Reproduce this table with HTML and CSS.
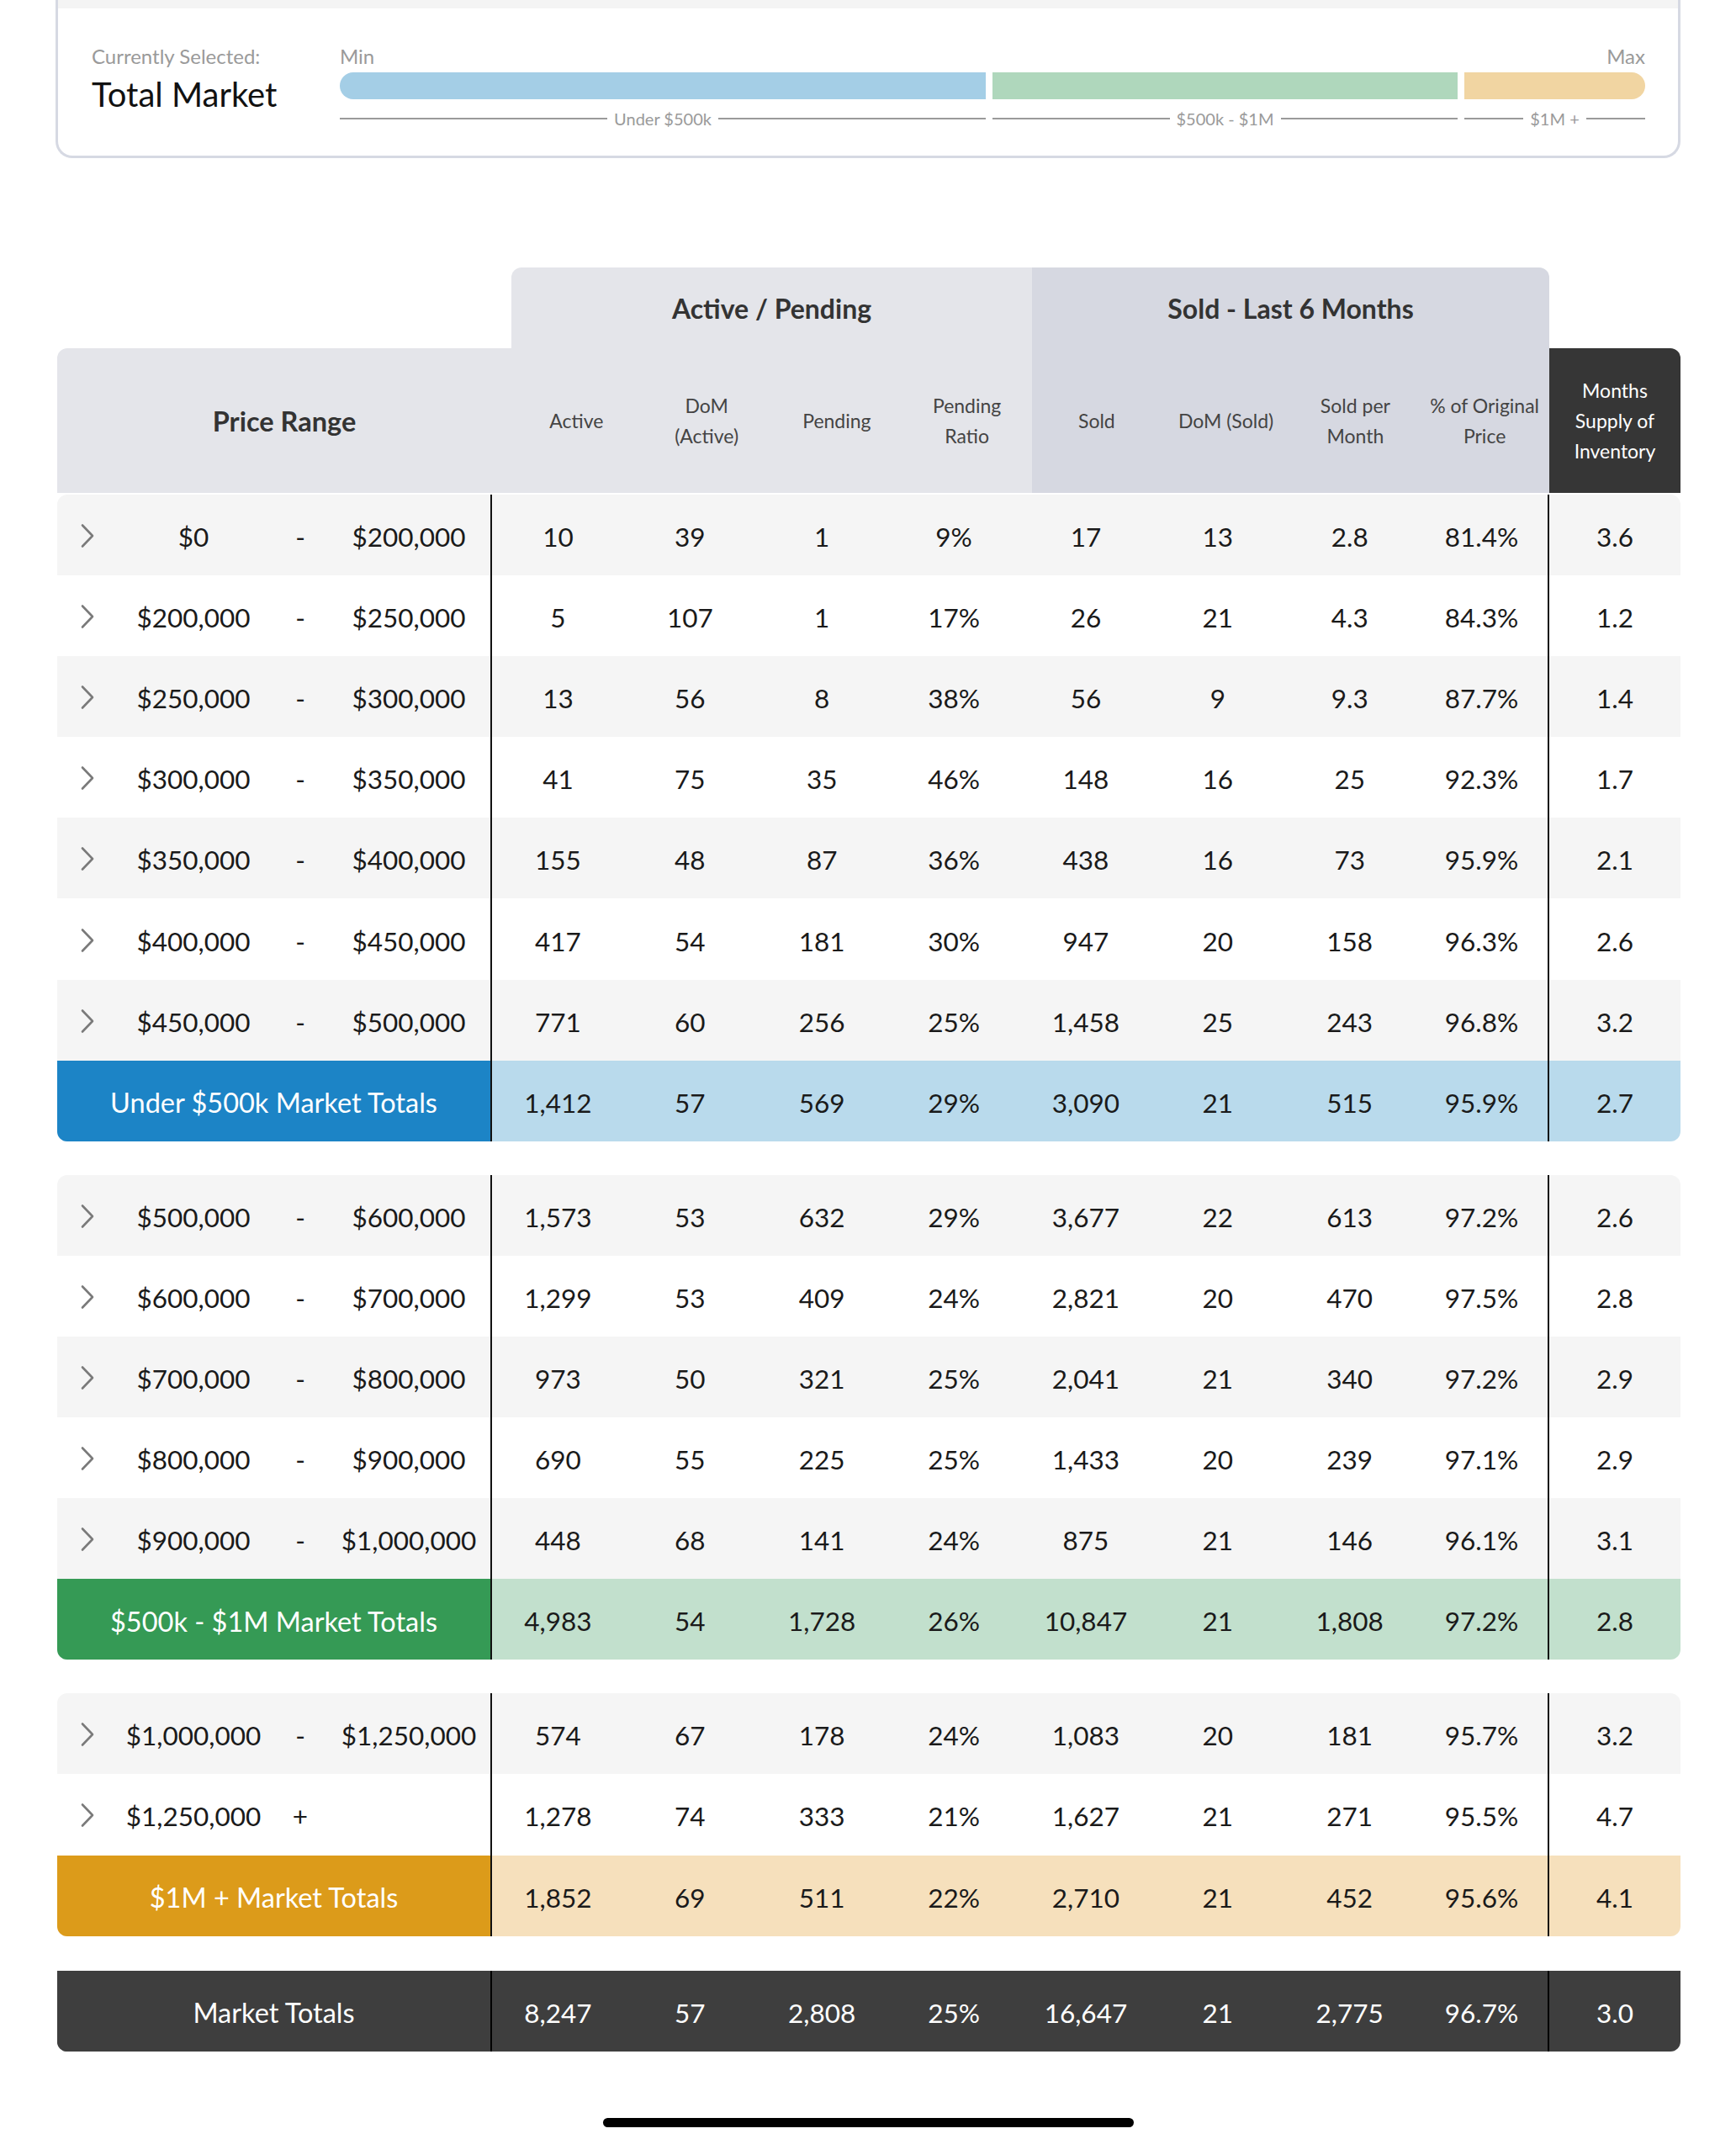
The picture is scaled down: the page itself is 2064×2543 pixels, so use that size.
FILE: index.html
```html
<!DOCTYPE html>
<html lang="en">
<head>
<meta charset="utf-8">
<title>Market Report</title>
<link rel="stylesheet" href="styles.css">
</head>
<body>
<div class="page">
  <div class="card">
    <div class="card-top"></div>
    <div class="card-body">
      <div class="selected">
        <div class="sel-label">Currently Selected:</div>
        <div class="sel-value">Total Market</div>
      </div>
      <div class="scale">
        <div class="scale-ends"><span>Min</span><span>Max</span></div>
        <div class="bars">
          <div class="seg seg-blue"><div class="bar"></div><div class="seg-label"><span>Under $500k</span></div></div>
          <div class="seg seg-green"><div class="bar"></div><div class="seg-label"><span>$500k - $1M</span></div></div>
          <div class="seg seg-orange"><div class="bar"></div><div class="seg-label"><span>$1M +</span></div></div>
        </div>
      </div>
    </div>
  </div>

  <div class="table">
    <div class="thead">
      <div class="th-empty"></div>
      <div class="th-group th-active">Active / Pending</div>
      <div class="th-group th-sold">Sold - Last 6 Months</div>
      <div class="th-empty"></div>
      <div class="th-price">Price Range</div>
      <div class="th-col th-a">Active</div>
      <div class="th-col th-a">DoM<br>(Active)</div>
      <div class="th-col th-a">Pending</div>
      <div class="th-col th-a">Pending<br>Ratio</div>
      <div class="th-col th-s">Sold</div>
      <div class="th-col th-s">DoM (Sold)</div>
      <div class="th-col th-s">Sold per<br>Month</div>
      <div class="th-col th-s">% of Original<br>Price</div>
      <div class="th-months">Months<br>Supply of<br>Inventory</div>
    </div>

    <div class="section first">
      <div class="row alt">
        <div class="price"><svg class="chev" viewBox="0 0 18 30"><path d="M3 2.5 L15 15 L3 27.5"/></svg><span class="p1">$0</span><span class="dash">-</span><span class="p2">$200,000</span></div>
        <div class="c">10</div><div class="c">39</div><div class="c">1</div><div class="c">9%</div><div class="c">17</div><div class="c">13</div><div class="c">2.8</div><div class="c">81.4%</div><div class="m">3.6</div>
      </div>
      <div class="row">
        <div class="price"><svg class="chev" viewBox="0 0 18 30"><path d="M3 2.5 L15 15 L3 27.5"/></svg><span class="p1">$200,000</span><span class="dash">-</span><span class="p2">$250,000</span></div>
        <div class="c">5</div><div class="c">107</div><div class="c">1</div><div class="c">17%</div><div class="c">26</div><div class="c">21</div><div class="c">4.3</div><div class="c">84.3%</div><div class="m">1.2</div>
      </div>
      <div class="row alt">
        <div class="price"><svg class="chev" viewBox="0 0 18 30"><path d="M3 2.5 L15 15 L3 27.5"/></svg><span class="p1">$250,000</span><span class="dash">-</span><span class="p2">$300,000</span></div>
        <div class="c">13</div><div class="c">56</div><div class="c">8</div><div class="c">38%</div><div class="c">56</div><div class="c">9</div><div class="c">9.3</div><div class="c">87.7%</div><div class="m">1.4</div>
      </div>
      <div class="row">
        <div class="price"><svg class="chev" viewBox="0 0 18 30"><path d="M3 2.5 L15 15 L3 27.5"/></svg><span class="p1">$300,000</span><span class="dash">-</span><span class="p2">$350,000</span></div>
        <div class="c">41</div><div class="c">75</div><div class="c">35</div><div class="c">46%</div><div class="c">148</div><div class="c">16</div><div class="c">25</div><div class="c">92.3%</div><div class="m">1.7</div>
      </div>
      <div class="row alt">
        <div class="price"><svg class="chev" viewBox="0 0 18 30"><path d="M3 2.5 L15 15 L3 27.5"/></svg><span class="p1">$350,000</span><span class="dash">-</span><span class="p2">$400,000</span></div>
        <div class="c">155</div><div class="c">48</div><div class="c">87</div><div class="c">36%</div><div class="c">438</div><div class="c">16</div><div class="c">73</div><div class="c">95.9%</div><div class="m">2.1</div>
      </div>
      <div class="row">
        <div class="price"><svg class="chev" viewBox="0 0 18 30"><path d="M3 2.5 L15 15 L3 27.5"/></svg><span class="p1">$400,000</span><span class="dash">-</span><span class="p2">$450,000</span></div>
        <div class="c">417</div><div class="c">54</div><div class="c">181</div><div class="c">30%</div><div class="c">947</div><div class="c">20</div><div class="c">158</div><div class="c">96.3%</div><div class="m">2.6</div>
      </div>
      <div class="row alt">
        <div class="price"><svg class="chev" viewBox="0 0 18 30"><path d="M3 2.5 L15 15 L3 27.5"/></svg><span class="p1">$450,000</span><span class="dash">-</span><span class="p2">$500,000</span></div>
        <div class="c">771</div><div class="c">60</div><div class="c">256</div><div class="c">25%</div><div class="c">1,458</div><div class="c">25</div><div class="c">243</div><div class="c">96.8%</div><div class="m">3.2</div>
      </div>
      <div class="row total total-blue">
        <div class="price tlabel">Under $500k Market Totals</div>
        <div class="c">1,412</div><div class="c">57</div><div class="c">569</div><div class="c">29%</div><div class="c">3,090</div><div class="c">21</div><div class="c">515</div><div class="c">95.9%</div><div class="m">2.7</div>
      </div>
    </div>

    <div class="section">
      <div class="row alt">
        <div class="price"><svg class="chev" viewBox="0 0 18 30"><path d="M3 2.5 L15 15 L3 27.5"/></svg><span class="p1">$500,000</span><span class="dash">-</span><span class="p2">$600,000</span></div>
        <div class="c">1,573</div><div class="c">53</div><div class="c">632</div><div class="c">29%</div><div class="c">3,677</div><div class="c">22</div><div class="c">613</div><div class="c">97.2%</div><div class="m">2.6</div>
      </div>
      <div class="row">
        <div class="price"><svg class="chev" viewBox="0 0 18 30"><path d="M3 2.5 L15 15 L3 27.5"/></svg><span class="p1">$600,000</span><span class="dash">-</span><span class="p2">$700,000</span></div>
        <div class="c">1,299</div><div class="c">53</div><div class="c">409</div><div class="c">24%</div><div class="c">2,821</div><div class="c">20</div><div class="c">470</div><div class="c">97.5%</div><div class="m">2.8</div>
      </div>
      <div class="row alt">
        <div class="price"><svg class="chev" viewBox="0 0 18 30"><path d="M3 2.5 L15 15 L3 27.5"/></svg><span class="p1">$700,000</span><span class="dash">-</span><span class="p2">$800,000</span></div>
        <div class="c">973</div><div class="c">50</div><div class="c">321</div><div class="c">25%</div><div class="c">2,041</div><div class="c">21</div><div class="c">340</div><div class="c">97.2%</div><div class="m">2.9</div>
      </div>
      <div class="row">
        <div class="price"><svg class="chev" viewBox="0 0 18 30"><path d="M3 2.5 L15 15 L3 27.5"/></svg><span class="p1">$800,000</span><span class="dash">-</span><span class="p2">$900,000</span></div>
        <div class="c">690</div><div class="c">55</div><div class="c">225</div><div class="c">25%</div><div class="c">1,433</div><div class="c">20</div><div class="c">239</div><div class="c">97.1%</div><div class="m">2.9</div>
      </div>
      <div class="row alt">
        <div class="price"><svg class="chev" viewBox="0 0 18 30"><path d="M3 2.5 L15 15 L3 27.5"/></svg><span class="p1">$900,000</span><span class="dash">-</span><span class="p2">$1,000,000</span></div>
        <div class="c">448</div><div class="c">68</div><div class="c">141</div><div class="c">24%</div><div class="c">875</div><div class="c">21</div><div class="c">146</div><div class="c">96.1%</div><div class="m">3.1</div>
      </div>
      <div class="row total total-green">
        <div class="price tlabel">$500k - $1M Market Totals</div>
        <div class="c">4,983</div><div class="c">54</div><div class="c">1,728</div><div class="c">26%</div><div class="c">10,847</div><div class="c">21</div><div class="c">1,808</div><div class="c">97.2%</div><div class="m">2.8</div>
      </div>
    </div>

    <div class="section">
      <div class="row alt">
        <div class="price"><svg class="chev" viewBox="0 0 18 30"><path d="M3 2.5 L15 15 L3 27.5"/></svg><span class="p1">$1,000,000</span><span class="dash">-</span><span class="p2">$1,250,000</span></div>
        <div class="c">574</div><div class="c">67</div><div class="c">178</div><div class="c">24%</div><div class="c">1,083</div><div class="c">20</div><div class="c">181</div><div class="c">95.7%</div><div class="m">3.2</div>
      </div>
      <div class="row">
        <div class="price"><svg class="chev" viewBox="0 0 18 30"><path d="M3 2.5 L15 15 L3 27.5"/></svg><span class="p1">$1,250,000</span><span class="dash">+</span><span class="p2"></span></div>
        <div class="c">1,278</div><div class="c">74</div><div class="c">333</div><div class="c">21%</div><div class="c">1,627</div><div class="c">21</div><div class="c">271</div><div class="c">95.5%</div><div class="m">4.7</div>
      </div>
      <div class="row total total-orange">
        <div class="price tlabel">$1M + Market Totals</div>
        <div class="c">1,852</div><div class="c">69</div><div class="c">511</div><div class="c">22%</div><div class="c">2,710</div><div class="c">21</div><div class="c">452</div><div class="c">95.6%</div><div class="m">4.1</div>
      </div>
    </div>

    <div class="section grand">
      <div class="row total total-dark">
        <div class="price tlabel">Market Totals</div>
        <div class="c">8,247</div><div class="c">57</div><div class="c">2,808</div><div class="c">25%</div><div class="c">16,647</div><div class="c">21</div><div class="c">2,775</div><div class="c">96.7%</div><div class="m">3.0</div>
      </div>
    </div>
  </div>
</div>
<div class="footer"><div class="home-indicator"></div></div>
</body>
</html>
```

FILE: styles.css
```css
* { box-sizing: border-box; margin: 0; padding: 0; }
html, body { background: #ffffff; }
body {
  font-family: Lato, "Liberation Sans", sans-serif;
  color: #1a1a1a;
  width: 2064px;
  height: 2543px;
  overflow: hidden;
}
.page { padding: 0 66px; }

/* ---------- selection card ---------- */
.card {
  width: 1932px;
  height: 188px;
  border: 3px solid #d6d9e3;
  border-top: 0;
  border-radius: 0 0 20px 20px;
}
.card-top { height: 10px; background: #f4f4f4; }
.card-body { display: flex; padding: 45px 39px 0 40px; }
.selected { width: 295px; }
.sel-label { font-size: 24px; line-height: 24px; color: #9a9a9a; }
.sel-value { margin-top: 10px; font-size: 40px; line-height: 46px; color: #111; }
.scale { flex: 1; }
.scale-ends {
  display: flex;
  justify-content: space-between;
  font-size: 24px;
  line-height: 24px;
  color: #9a9a9a;
}
.bars { display: flex; gap: 8px; margin-top: 7px; }
.seg { display: flex; flex-direction: column; }
.seg-blue { width: 768px; }
.seg-green { width: 553px; }
.seg-orange { width: 215px; }
.bar { height: 32px; }
.seg-blue .bar { background: #a4cee6; border-radius: 16px 0 0 16px; }
.seg-green .bar { background: #afd7bc; }
.seg-orange .bar { background: #f1d5a2; border-radius: 0 16px 16px 0; }
.seg-label {
  display: flex;
  align-items: center;
  gap: 8px;
  height: 28px;
  margin-top: 9px;
  font-size: 20px;
  color: #9a9a9a;
  white-space: nowrap;
}
.seg-label::before, .seg-label::after {
  content: "";
  flex: 1;
  height: 2px;
  background: #9a9a9a;
}

/* ---------- table header ---------- */
.table { margin: 130px 0 0 2px; width: 1930px; }
.thead {
  display: grid;
  grid-template-columns: 540px repeat(4, 154.75px) repeat(4, 153.75px) 156px;
  grid-template-rows: 96px 172px;
}
.th-group {
  display: flex;
  align-items: center;
  justify-content: center;
  font-size: 32px;
  font-weight: 700;
  color: #333;
}
.th-active { grid-column: 2 / 6; background: #e4e5ea; border-radius: 12px 0 0 0; }
.th-sold { grid-column: 6 / 10; background: #d6d8e1; border-radius: 0 12px 0 0; }
.th-price {
  display: flex;
  align-items: center;
  justify-content: center;
  background: #e4e5ea;
  border-radius: 12px 0 0 0;
  font-size: 32.5px;
  font-weight: 700;
  color: #333;
}
.th-col {
  display: flex;
  align-items: center;
  justify-content: center;
  text-align: center;
  font-size: 23px;
  line-height: 36px;
  color: #444;
  white-space: nowrap;
}
.th-a { background: #e4e5ea; }
.th-s { background: #d6d8e1; }
.th-months {
  display: flex;
  align-items: center;
  justify-content: center;
  text-align: center;
  background: #363636;
  color: #fff;
  border-radius: 0 12px 0 0;
  font-size: 23px;
  line-height: 36px;
  white-space: nowrap;
}

/* ---------- table body ---------- */
.section { margin-top: 40px; border-radius: 12px; overflow: hidden; }
.section.first { margin-top: 2px; }
.section.grand { margin-top: 41px; border-radius: 0 0 12px 12px; }
.row {
  display: grid;
  grid-template-columns: 517px repeat(8, 1fr) 158px;
  height: 96.1px;
  font-size: 31.5px;
  background: #ffffff;
}
.row.alt { background: #f5f5f5; }
.row > div { display: flex; align-items: center; padding-top: 4px; }
.price {
  display: grid !important;
  grid-template-columns: 67px 190px 64px 1fr;
  border-right: 2px solid #111;
  align-items: center;
}
.chev {
  width: 18px;
  height: 30px;
  margin-left: 27px;
  margin-top: -2px;
  fill: none;
  stroke: #7a7a7a;
  stroke-width: 2.6;
  stroke-linecap: round;
  stroke-linejoin: round;
}
.p1, .dash, .p2 { text-align: center; white-space: nowrap; }
.c { justify-content: center; }
.m { justify-content: center; border-left: 2px solid #111; }

.total .tlabel {
  display: flex !important;
  justify-content: center;
  color: #fff;
  font-size: 32.5px;
}
.total-blue { background: #b9daec; }
.total-blue .tlabel { background: #1c84c6; }
.total-green { background: #c2e0cd; }
.total-green .tlabel { background: #359a55; }
.total-orange { background: #f6e0bc; }
.total-orange .tlabel { background: #dc9b1a; }
.total-dark { background: #3e3e3e; color: #fff; }
.total-dark .tlabel { background: #3e3e3e; }
.total-dark .m, .total-dark .price { border-color: #000; }

/* ---------- footer ---------- */
.footer {
  height: 105px;
  padding-top: 79px;
  border-bottom: 1px solid #d4d4d4;
}
.home-indicator {
  width: 631px;
  height: 11px;
  margin: 0 auto;
  border-radius: 6px;
  background: #000;
}
```
